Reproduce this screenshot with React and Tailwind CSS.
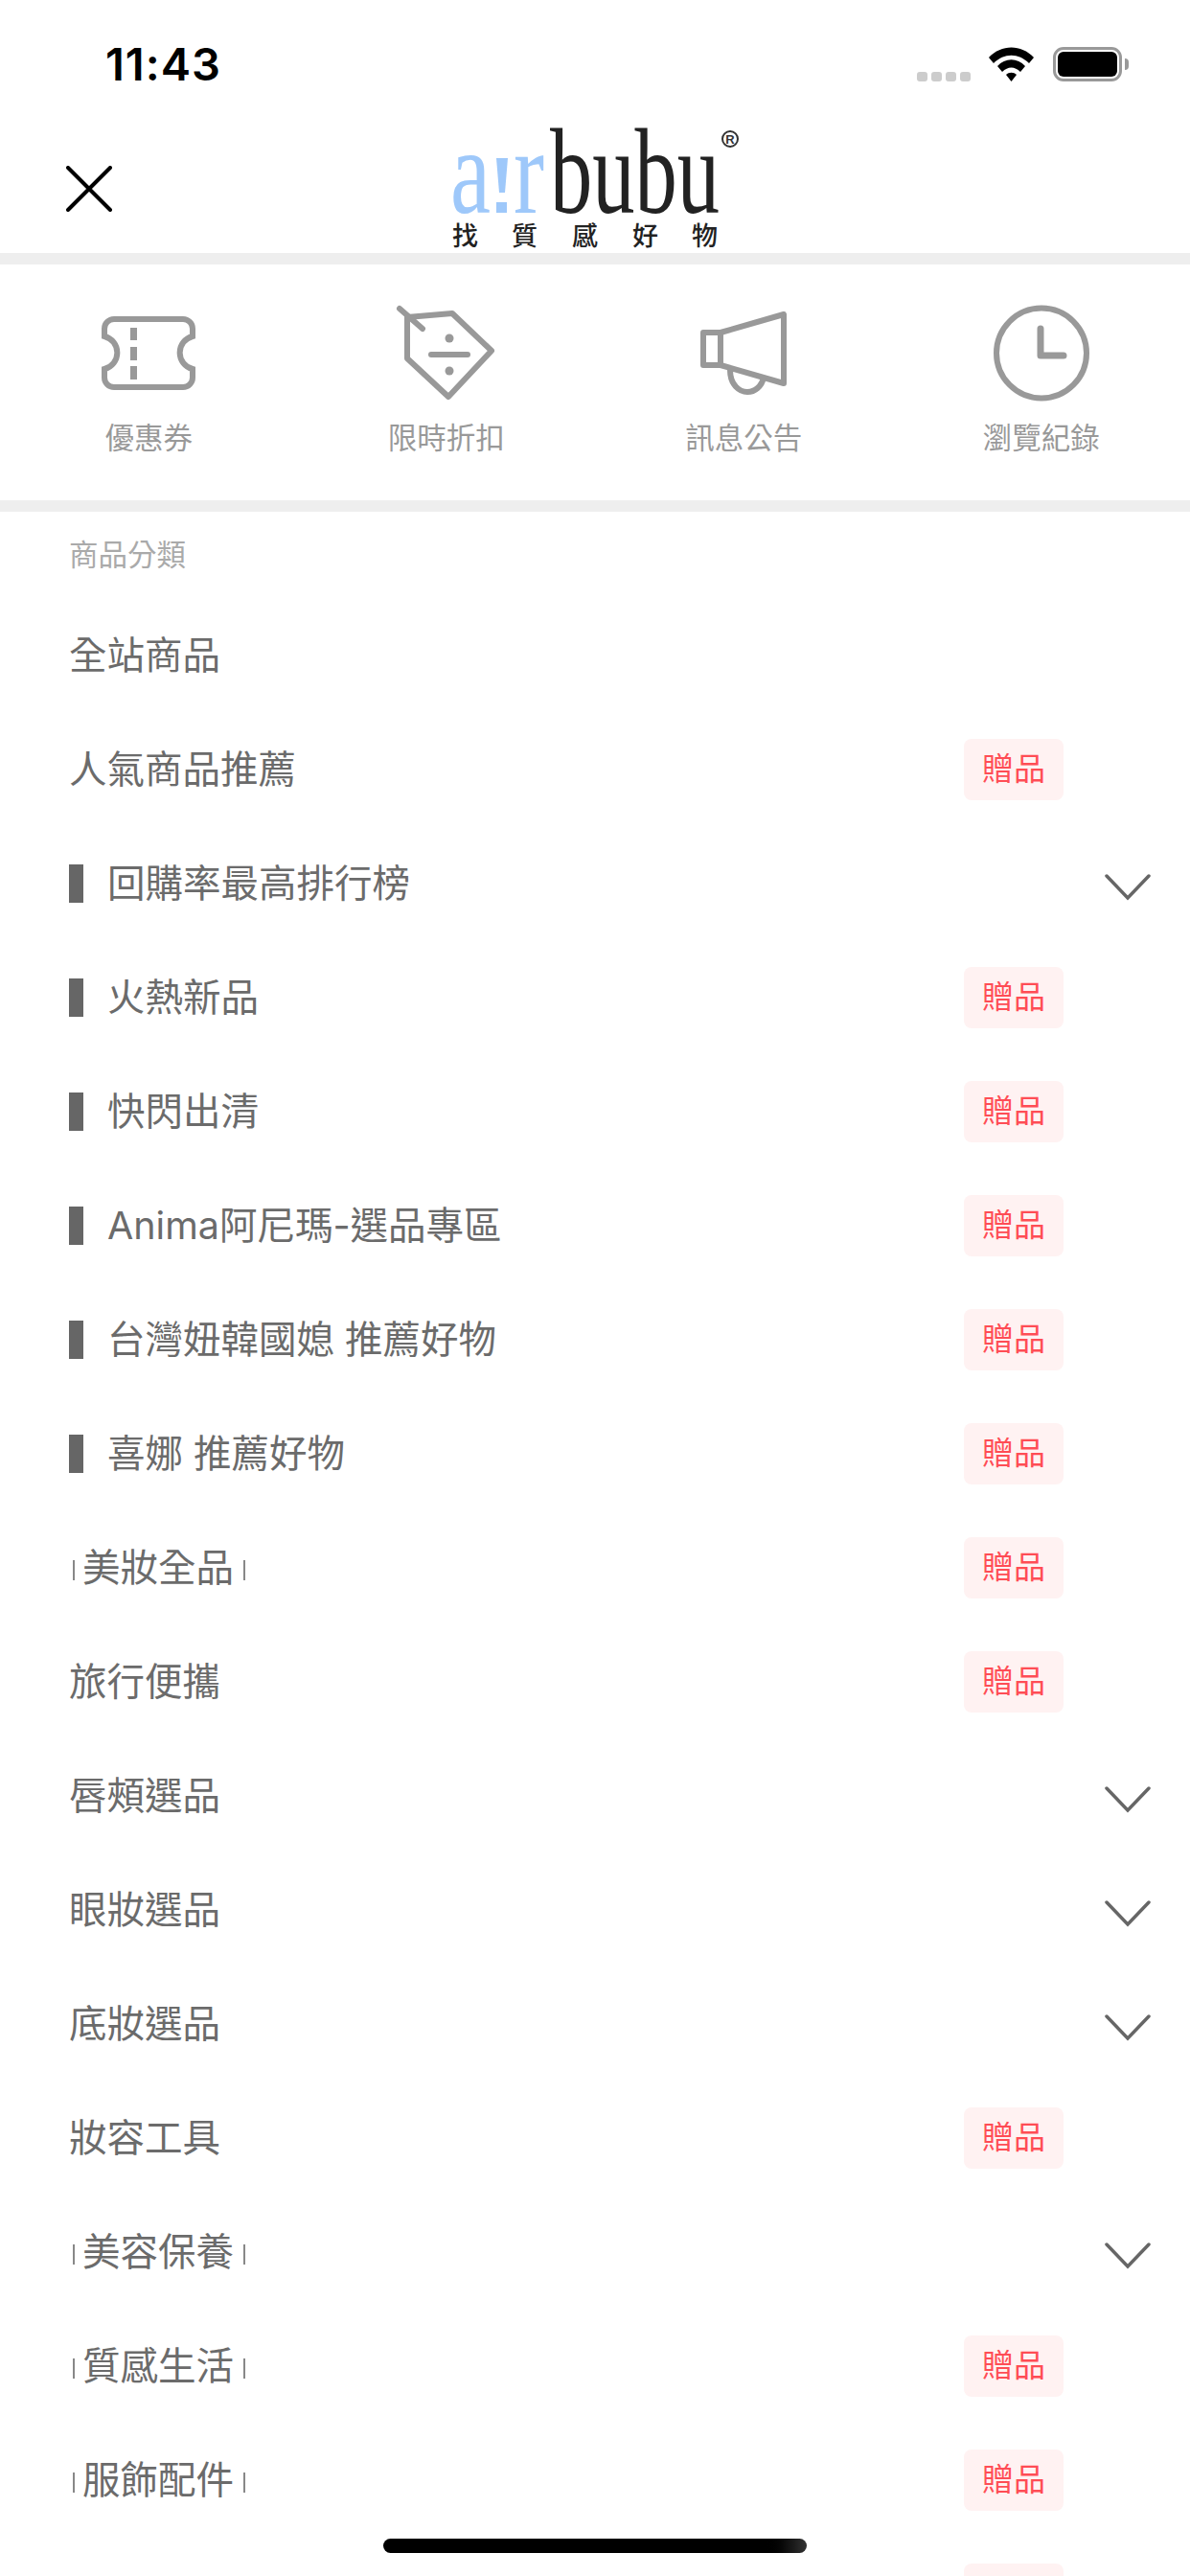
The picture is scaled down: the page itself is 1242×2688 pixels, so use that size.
const FONT = "font-['Inter','Noto_Sans_CJK_TC',sans-serif]";

const quickLinks = [
  { label: "優惠券", icon: <TicketIcon /> },
  { label: "限時折扣", icon: <TagIcon /> },
  { label: "訊息公告", icon: <MegaphoneIcon /> },
  { label: "瀏覽紀錄", icon: <ClockIcon /> },
];

const categories = [
  { name: "全站商品" },
  { name: "人氣商品推薦", gift: true },
  { name: "回購率最高排行榜", mark: "bar", more: true },
  { name: "火熱新品", mark: "bar", gift: true },
  { name: "快閃出清", mark: "bar", gift: true },
  { name: "Anima阿尼瑪-選品專區", mark: "bar", gift: true },
  { name: "台灣妞韓國媳 推薦好物", mark: "bar", gift: true },
  { name: "喜娜 推薦好物", mark: "bar", gift: true },
  { name: "美妝全品", mark: "thin", gift: true },
  { name: "旅行便攜", gift: true },
  { name: "唇頰選品", more: true },
  { name: "眼妝選品", more: true },
  { name: "底妝選品", more: true },
  { name: "妝容工具", gift: true },
  { name: "美容保養", mark: "thin", more: true },
  { name: "質感生活", mark: "thin", gift: true },
  { name: "服飾配件", mark: "thin", gift: true },
  { name: "", gift: true },
];

function TicketIcon() {
  return (
    <svg width="110" height="110" viewBox="100 315 110 110" fill="none" stroke="#999" strokeWidth="6">
      <path d="M119 333H191A10 10 0 0 1 201 343V351A17.5 17.5 0 0 0 201 385V394A10 10 0 0 1 191 404H119A10 10 0 0 1 109 394V385A17.5 17.5 0 0 0 109 351V343A10 10 0 0 1 119 333Z" />
      <path d="M139.5 342V355M139.5 362V376M139.5 382V396" strokeWidth="7" />
    </svg>
  );
}

function TagIcon() {
  return (
    <svg width="110" height="110" viewBox="411 315 110 110" fill="none" stroke="#999" strokeWidth="6" strokeLinecap="round" strokeLinejoin="round">
      <path d="M425 331L472 327L513 366L468 414L425 374Z" />
      <path d="M417 322L441 343" />
      <path d="M450 370H488" />
      <circle cx="469" cy="353" r="4.5" fill="#999" stroke="none" />
      <circle cx="469" cy="387" r="4.5" fill="#999" stroke="none" />
    </svg>
  );
}

function MegaphoneIcon() {
  return (
    <svg width="110" height="110" viewBox="721 315 110 110" fill="none" stroke="#999" strokeWidth="6" strokeLinejoin="round">
      <path d="M734 347H752V381H734Z" />
      <path d="M752 347L818 328V400L752 381Z" />
      <path d="M762 386C762 402 772 409 780 409C788 409 795 403 797 394" />
    </svg>
  );
}

function ClockIcon() {
  return (
    <svg width="110" height="110" viewBox="1032 315 110 110" fill="none" stroke="#999" strokeWidth="6">
      <circle cx="1087" cy="368.5" r="47" />
      <path d="M1086 343V371H1110" strokeWidth="7" strokeLinecap="round" strokeLinejoin="round" />
    </svg>
  );
}

function Logo() {
  return (
    <svg width="320" height="134" viewBox="460 130 320 134" className="block overflow-visible">
      <text x="470" y="222" fontFamily="Liberation Serif" fontSize="127" fill="#9ec8fa" textLength="42" lengthAdjust="spacingAndGlyphs">a</text>
      <path d="M518 165H530L527 201H521Z" fill="#9ec8fa" />
      <rect x="518" y="211" width="11" height="11" fill="#9ec8fa" />
      <text x="536" y="222" fontFamily="Liberation Serif" fontSize="127" fill="#9ec8fa" textLength="32" lengthAdjust="spacingAndGlyphs">r</text>
      <text x="574" y="222" fontFamily="Liberation Serif" fontSize="127" fill="#222" textLength="177" lengthAdjust="spacingAndGlyphs">bubu</text>
      <circle cx="762" cy="145" r="8" fill="none" stroke="#333" strokeWidth="2" />
      <text x="762" y="150" textAnchor="middle" fontFamily="Liberation Sans" fontSize="13" fontWeight="700" fill="#333">R</text>
      <text y="256" fontFamily="Noto Sans CJK TC" fontSize="27" fontWeight="500" fill="#222">
        <tspan x="472">找</tspan>
        <tspan x="534">質</tspan>
        <tspan x="597">感</tspan>
        <tspan x="660">好</tspan>
        <tspan x="722">物</tspan>
      </text>
    </svg>
  );
}

function StatusBar() {
  return (
    <div className="h-[110px] flex items-start justify-between pt-[37px] pl-[110px] pr-[71px]">
      <span className="text-[47px] leading-[60px] tracking-[1px] font-semibold text-black">11:43</span>
      <div className="flex items-start pt-[12px]">
        <div className="flex gap-[4px] mt-[26px] mr-[19px]">
          <span className="w-[11px] h-[10px] rounded-[3px] bg-[#ccc]" />
          <span className="w-[11px] h-[10px] rounded-[3px] bg-[#ccc]" />
          <span className="w-[11px] h-[10px] rounded-[3px] bg-[#ccc]" />
          <span className="w-[11px] h-[10px] rounded-[3px] bg-[#ccc]" />
        </div>
        <svg width="47" height="36" viewBox="0 0 47 36" className="mr-[20px]">
          <path d="M0 11C13 -3 34 -3 47 11L42 17C31 6 16 6 5 17Z" />
          <path d="M9 20C17 11 30 11 38 20L33 26C27 20 20 20 14 26Z" />
          <path d="M18 29C21 26 26 26 29 29L23.5 36Z" />
        </svg>
        <div className="relative w-[72px] h-[36px] rounded-[11px] border-[3px] border-[#999] p-[2px]">
          <div className="w-full h-full rounded-[6px] bg-black" />
          <span className="absolute right-[-10px] top-[9px] w-[4px] h-[12px] rounded-r-full bg-[#999]" />
        </div>
      </div>
    </div>
  );
}

function CategoryRow({ item }) {
  return (
    <div className="h-[119px] flex items-center justify-between pl-[72px] pr-[41px]">
      <div className="flex items-center text-[39.5px] leading-[50px] text-[#6b6b6b]">
        {item.mark === "bar" && <span className="w-[15px] h-[40px] bg-[#666] mr-[25px]" />}
        {item.mark === "thin" && <span className="w-[2px] h-[21px] bg-[#888] ml-[4px] mr-[8px] mt-[5px]" />}
        <span className="whitespace-nowrap">{item.name}</span>
        {item.mark === "thin" && <span className="w-[2px] h-[21px] bg-[#888] ml-[10px] mt-[5px]" />}
      </div>
      {item.gift && (
        <span className="w-[104px] h-[64px] mr-[91px] flex items-center justify-center rounded-[8px] bg-[#fff2f2] text-[33px] text-[#ff4d55]">
          贈品
        </span>
      )}
      {item.more && (
        <svg width="48" height="28" viewBox="0 0 48 28" fill="none" stroke="#666" strokeWidth="3.5" strokeLinecap="round" className="mt-[8px]">
          <path d="M2 2L24 25L46 2" />
        </svg>
      )}
    </div>
  );
}

export default function App() {
  return (
    <div className={`relative w-[1242px] h-[2688px] overflow-hidden bg-white ${FONT}`}>
      <StatusBar />

      {/* Nav bar */}
      <div className="h-[154px] grid grid-cols-[460px_320px_1fr]">
        <div className="flex items-start pl-[69px] pt-[63px]">
          <svg width="48" height="48" viewBox="0 0 48 48" fill="none" stroke="#000" strokeWidth="4" strokeLinecap="round">
            <path d="M2 2L46 46M46 2L2 46" />
          </svg>
        </div>
        <div className="pt-[20px]">
          <Logo />
        </div>
      </div>
      <div className="h-[12px] bg-[#eee]" />

      {/* Quick links */}
      <div className="h-[246px] grid grid-cols-4 pt-[39px]">
        {quickLinks.map((link) => (
          <div key={link.label} className="flex flex-col items-center">
            {link.icon}
            <span className="mt-[12px] text-[30.5px] leading-[40px] text-[#999]">{link.label}</span>
          </div>
        ))}
      </div>
      <div className="h-[12px] bg-[#eee]" />

      <div className="pt-[25px] pb-[25px] pl-[72px] text-[30.5px] leading-[40px] text-[#aaa]">商品分類</div>

      {categories.map((item, i) => (
        <CategoryRow key={i} item={item} />
      ))}

      {/* Home indicator */}
      <div className="absolute left-[400px] top-[2649px] w-[442px] h-[15px] rounded-full bg-gradient-to-r from-black from-90% to-[#333]" />
    </div>
  );
}
